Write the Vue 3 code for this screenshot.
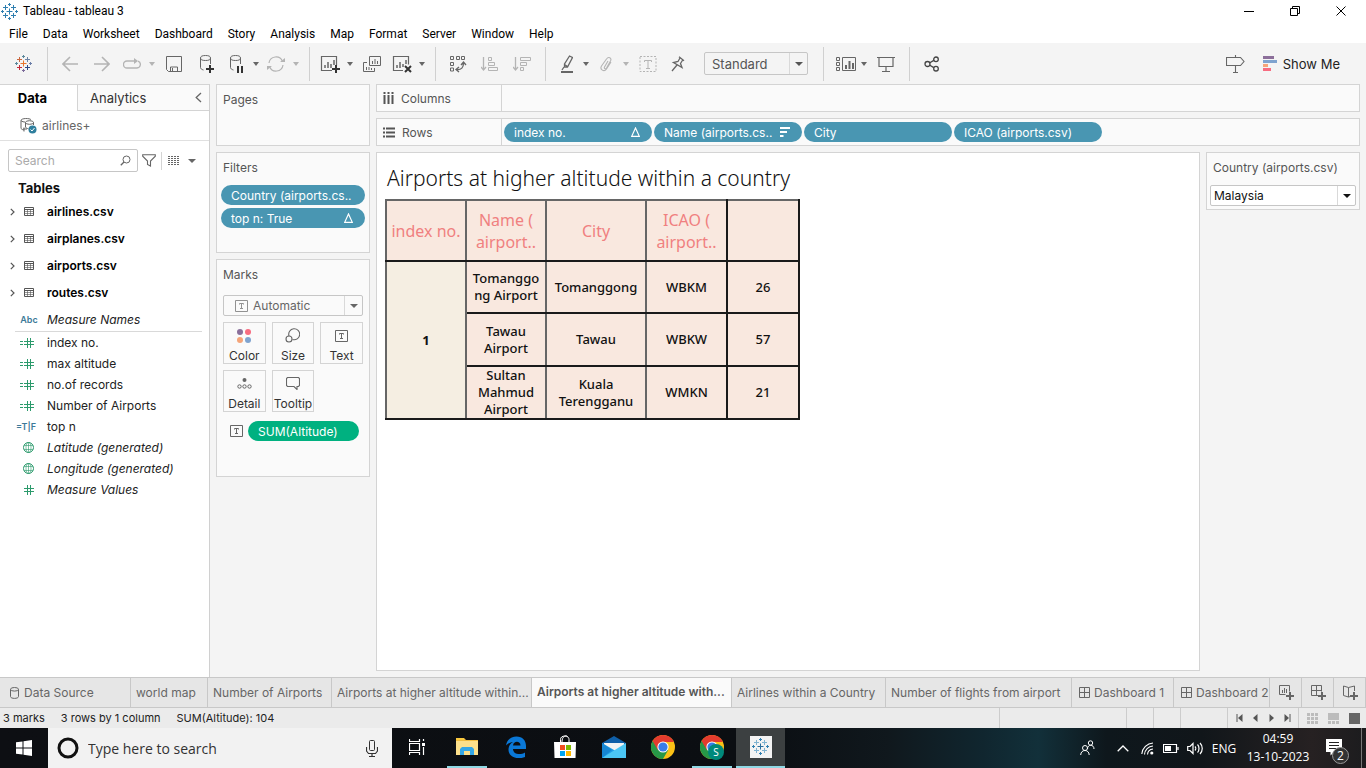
<script setup>
import { h, ref } from 'vue'

const plus = (x, y, r, c, w = 1) =>
  `<path d="M${x - r} ${y}h${2 * r}M${x} ${y - r}v${2 * r}" stroke="${c}" stroke-width="${w}"/>`

const mark = (mid, ul, ur, ll, lr, n, s, w, e) =>
  plus(8.5, 8.5, 3, mid, 1) +
  plus(4.5, 4.5, 2.5, ul) + plus(12.5, 4.5, 2.5, ur) +
  plus(4.5, 12.5, 2.5, ll) + plus(12.5, 12.5, 2.5, lr) +
  plus(8.5, 1.5, 1.5, n) + plus(8.5, 15.5, 1.5, s) +
  plus(1.5, 8.5, 1.5, w) + plus(15.5, 8.5, 1.5, e)

const blue = '#2f7fb0'
const pale = '#7fb3d1'

const chrome =
  '<circle cx="12" cy="12" r="12" fill="#fbc116" stroke="none"/><g stroke="none">' +
  '<path d="M12 12L1.6 6A12 12 0 0 0 12 24L17.2 15z" fill="#279847"/>' +
  '<path d="M12 0A12 12 0 0 0 1.6 6L6.8 15L12 7H22.9A12 12 0 0 0 12 0z" fill="#e33b2e"/>' +
  '<circle cx="12" cy="12" r="5.6" fill="#fff"/><circle cx="12" cy="12" r="4.600" fill="#3a7de8"/></g>'

const icons = {
  app: [17, 17, mark(blue, blue, blue, blue, blue, blue, blue, blue, blue)],
  logo: [17, 17, mark('#e8762c', '#c9673f', '#6c84a5', '#c2293a', '#2b4a86', '#5b879b', '#7b6a9a', '#59879b', '#6b7ea8')],
  back: [16, 16, '<path d="M16 8H1M8 1L1 8l7 7" stroke-width="1.6"/>'],
  forward: [16, 16, '<path d="M0 8h15M8 1l7 7-7 7" stroke-width="1.6"/>'],
  loop: [18, 12, '<path d="M12 3H4a3.5 3.5 0 0 0 0 7h10a3.5 3.5 0 0 0 1-6.8" stroke-width="1.3"/><path d="M11 0l4 3-4 3z" fill="currentColor" stroke="none"/>'],
  save: [16, 16, '<path d="M.5 .5h15v15H2.5l-2-2zM4.5 15v-4h7v4M6.5 12v3"/>'],
  dbadd: [16, 18, '<ellipse cx="7.5" cy="3" rx="5" ry="2.5"/><path d="M2.500 3v9.500c0 1 1 2 3 2.500M12.500 3v6"/><path d="M8 14h8M12 10v8" stroke="#333" stroke-width="2"/>'],
  dbpause: [16, 18, '<ellipse cx="7.500" cy="3" rx="5" ry="2.500"/><path d="M2.500 3v9.500c0 1 1 2 3 2.500M12.500 3v6"/><path d="M10 11v7M14 11v7" stroke="#333" stroke-width="2"/>'],
  refresh: [18, 16, '<path d="M2 7a7 7 0 0 1 13.500-1.500M16 9a7 7 0 0 1-13.500 1.500" stroke-width="1.200"/><path d="M13 6h5V2M5 10H0v4" fill="currentColor" stroke="none"/>'],
  newsheet: [20, 18, '<path d="M12 15.500H1.500V1.500h15v9" stroke-width="1.200"/><path d="M5 10v3M8 7v6M11 9v4M14 5v5" stroke-width="1.500"/><path d="M12 14h8M16 10v8" stroke="#333" stroke-width="2"/>'],
  dup: [18, 16, '<path d="M6.500 .5h11v9h-11zM4 6.500H.5v9h11V12"/><path d="M9.500 5v3M12 3v5M14.500 5v3M3.500 11v3M6 11v3M8.500 12v2"/>'],
  clear: [20, 18, '<path d="M11 15.500H1.500V1.500h15v8" stroke-width="1.200"/><path d="M5 10v3M8 7v6M11 9v3M14 5v4" stroke-width="1.500"/><path d="M13 11l6 6M19 11l-6 6" stroke="#333" stroke-width="2"/>'],
  swap: [18, 18, '<path d="M1.500 1.500h3v3h-3zM7.500 1.500h3v3h-3zM12.500 1.500h3v3h-3zM1.500 7.500h3v3h-3zM1.500 13h3v3h-3z"/><path d="M7.500 14.500c5 .5 7-2 7-6.500M12 10l2.500-3L17 10M10 12l-3 2.500L10 17" stroke-width="1.300"/>'],
  asc: [18, 16, '<path d="M2.500 1v13M0 11l2.500 3L5 11" stroke-width="1.300"/><path d="M7.500 1.500h3v3h-3zM7.500 6.500h6v3h-6zM7.500 11.500h9v3h-9z"/>'],
  desc: [18, 16, '<path d="M2.500 1v13M0 11l2.500 3L5 11" stroke-width="1.300"/><path d="M7.500 1.500h10v3h-10zM7.500 6.500h6v3h-6zM7.500 11.500h3v3h-3z"/>'],
  marker: [14, 18, '<path d="M10.500 1l3 1.500-5 9.500H5.500V9zM5.500 9.500l3 2M5 12l-2 3" stroke-width="1.300"/><path d="M2 17h12" stroke-width="2"/>'],
  clip: [14, 16, '<path d="M9 5L5.500 11c-.8 1.500 1 2.500 2 1L11.500 5c1.500-3-2-5-4-2L2.500 10c-2 3.500 2.500 6.500 5 3L12 6" stroke-width="1.100"/>'],
  textbox: [18, 16, '<rect x="1" y=".5" width="16" height="15" stroke-dasharray="2 1.500"/><path d="M5.500 6V4.500h7V6M9 4.500v8M7 12.500h4"/>'],
  pin: [18, 16, '<path d="M8 .8l5 4M12 3.500L9.500 7.500l1.500 4L2.500 6.500l4.500-1L9 2M6 9l-5 6" stroke-width="1.300"/>'],
  cards: [24, 16, '<path d="M4.500 1.500h3v3h-3zM4.500 6.500h3v3h-3zM4.500 11.500h3v3h-3zM10.500 1.500h13v13h-13z"/><path d="M14 9v4M17.500 5v8M21 7v6" stroke-width="2"/>'],
  present: [18, 16, '<path d="M0 1.500h18M2 2v8.500h14V2M9 10.500v5M5 15.500h8" stroke-width="1.200"/>'],
  share: [16, 16, '<g stroke="#444" stroke-width="1.300"><circle cx="3.500" cy="8" r="2.500"/><circle cx="12" cy="3.300" r="2.300"/><circle cx="12" cy="12.700" r="2.300"/><path d="M5.800 6.800l4-2.400M5.800 9.200l4 2.400"/></g>'],
  sign: [19, 18, '<path d="M.5 2.500h14L18 6.500l-3.500 4H.5zM9.500 0v2M9.500 10.500v7M7 17.500h5" stroke-width="1.100"/>'],
  showme: [14, 15, '<path d="M0 0h11v3H0z" fill="#8c6f9a" stroke="none"/><path d="M0 4h14v3H0z" fill="#7fa3cf" stroke="none"/><path d="M0 8h5v3H0z" fill="#f5a479" stroke="none"/><path d="M0 12h8v3H0z" fill="#f76c80" stroke="none"/>'],
  source: [17, 17, '<path d="M1 3.500v7.500c0 1 1 1.600 3 2M1 3.500C1 1 10 1 11 2.800" /><ellipse cx="9.500" cy="5.500" rx="4" ry="1.800"/><path d="M5.500 5.500v4.500c0 1 2 1.500 3 1.800M13.500 5.500V8M4 14.500v-4M3 12h4M1 3.500c1 1.300 3 1.500 4 1.500"/><circle cx="12.500" cy="12.500" r="4" fill="#2f7f9e" stroke="none"/><path d="M10.500 12.500l1.500 1.500 2.500-3" stroke="#fff"/>'],
  collapse: [7, 11, '<path d="M6 1L1.200 5.500 6 10" stroke-width="1.300"/>'],
  search: [11, 11, '<circle cx="6.500" cy="4.500" r="3.500"/><path d="M4 7L.8 10.200" stroke-width="1.300"/>'],
  funnel: [14, 13, '<path d="M.7 .7h12.600v1.500L8.500 7v5l-3-1.500V7L.7 2.200z" stroke-width="1.100"/>'],
  list: [12, 9, '<path d="M0 .5h12M0 2.500h12M0 4.500h12M0 6.500h12M0 8.500h12" stroke-dasharray="2 1"/>'],
  expand: [5, 8, '<path d="M.8 .8L4 4 .8 7.200" stroke-width="1.200"/>'],
  table: [10, 9, '<path d="M.5 .5h9v8h-9zM.5 2.500h9"/><path d="M.5 4.500h9M.5 6.500h9M3.500 2.500v6M6.500 2.500v6" stroke-opacity=".6"/>'],
  hash: [10, 10, '<path d="M3.500 0v10M6.500 0v10M0 3.500h10M0 6.500h10"/>'],
  calchash: [14, 10, '<path d="M7.500 0v10M10.500 0v10M4 3.500h10M4 6.500h10M0 3.500h3M0 6.500h3"/>'],
  globe: [11, 11, '<circle cx="5.500" cy="5.500" r="5"/><path d="M1 3.500h9M1 7.500h9M5.500 .5v10" stroke-opacity=".6"/><ellipse cx="5.500" cy="5.500" rx="2.500" ry="5" stroke-opacity=".6"/>'],
  iii: [11, 13, '<path d="M1.500 0v2M1.500 3v9M5.500 0v2M5.500 3v9M9.500 0v2M9.500 3v9" stroke-width="2"/>'],
  rows: [12, 11, '<path d="M0 1.500h2M3 1.500h9M0 5.500h2M3 5.500h9M0 9.500h2M3 9.500h9" stroke-width="2"/>'],
  delta: [9, 10, '<path d="M4.500 1L8.300 9.300H.7z" stroke-width="1.200"/>'],
  sorted: [10, 10, '<path d="M0 1h10M0 5h7M0 9h3.500" stroke-width="2"/>'],
  t: [13, 12, '<path d="M.5 .5h12v11H.5z"/><path d="M4.500 4.500v-1h4v1M6.500 3.500v5M5 8.500h3"/>'],
  color: [14, 14, '<g stroke="none"><circle cx="3" cy="3" r="3" fill="#8a6f9b"/><circle cx="11" cy="3" r="3" fill="#f76c80"/><circle cx="3" cy="11" r="3" fill="#f5a479"/><circle cx="11" cy="11" r="3" fill="#7fa3cf"/></g>'],
  size: [15, 15, '<path d="M4 8a5.500 5.500 0 1 1 3.500 3.500" stroke-width="1.100"/><circle cx="4" cy="11" r="3" stroke-width="1.100"/>'],
  detail: [15, 11, '<circle cx="7.500" cy="2" r="2" fill="currentColor" stroke="none"/><circle cx="2.500" cy="8.500" r="1.700"/><circle cx="7.500" cy="8.500" r="1.700"/><circle cx="12.500" cy="8.500" r="1.700"/>'],
  tooltip: [14, 13, '<path d="M1.500 .5h11l1 1v7l-1 1H11v3l-3-3H1.500l-1-1v-7z" stroke-width="1.100"/>'],
  cyl: [9, 12, '<path d="M.5 2.500v7c0 2.500 8 2.500 8 0v-7"/><ellipse cx="4.500" cy="2.300" rx="4" ry="1.800"/>'],
  grid: [11, 11, '<path d="M.5 .5h10v10H.5zM5.500 .5v10M.5 5.500h10"/>'],
  addsheet: [16, 15, '<path d="M6.500 9.500h-6v-9h10v6M3.500 5v3M5.500 3v5M7.500 4v4"/><path d="M7 11h8M11 7v8" stroke-width="2"/>'],
  adddash: [16, 15, '<path d="M7.500 10.500h-7v-10h10v6M5.500 .5v10M.5 5.500h10"/><path d="M7 11h8M11 7v8" stroke-width="2"/>'],
  addstory: [16, 15, '<path d="M.5 1l5 1.500L11.500 1v5M.5 1v9.500l5 1.500 2-.5M5.500 2.500V12"/><path d="M7 11h8M11 7v8" stroke-width="2"/>'],
  first: [7, 8, '<path d="M1 0v8" /><path d="M6.500 0v8L2 4z" fill="currentColor" stroke="none"/>'],
  prev: [5, 8, '<path d="M4.500 0v8L0 4z" fill="currentColor" stroke="none"/>'],
  next: [5, 8, '<path d="M.5 0v8L5 4z" fill="currentColor" stroke="none"/>'],
  last: [7, 8, '<path d="M6 0v8" /><path d="M.5 0v8L5 4z" fill="currentColor" stroke="none"/>'],
  tiles: [11, 11, '<path d="M0 1.500h11M0 5.500h11M0 9.500h11" stroke-width="3" stroke-dasharray="3 1"/>'],
  film: [11, 11, '<path d="M0 3.500h11" stroke-width="7"/><path d="M0 9.500h11" stroke-width="3" stroke-dasharray="3 1"/>'],
  full: [11, 11, '<path d="M0 0h11v11H0z" fill="currentColor" stroke="none"/>'],
  min: [10, 10, '<path d="M0 5.500h10"/>'],
  restore: [10, 10, '<path d="M.5 2.500h7v7h-7zM2.500 2.500v-2h7v7h-2"/>'],
  close: [10, 10, '<path d="M.5 .5l9 9M9.500 .5l-9 9"/>'],
  windows: [16, 16, '<path d="M0 2.300L6.500 1.400v6.100H0zM7.500 1.200L16 0v7.500H7.500zM0 8.500h6.500v6.100L0 13.700zM7.500 8.500H16V16l-8.500-1.200z" fill="#fff" stroke="none"/>'],
  cortana: [22, 22, '<circle cx="11" cy="11" r="9" stroke="#111" stroke-width="3"/>'],
  mic: [12, 17, '<rect x="3.500" y=".5" width="5" height="10" rx="1"/><path d="M.5 7v4l2 2.500h7l2-2.500V7M6 13.500v3M3 16.500h6" stroke-width="1.200"/>'],
  taskview: [17, 16, '<path d="M.5 0v2.500h10V0M.5 4.500h10v7H.5zM.5 16v-2.500h10V16M14.500 0v2M14.500 8v8" stroke-width="1.200"/><path d="M13 4h3v3h-3z" fill="#fff" stroke="none"/>'],
  folder: [22, 20, '<g stroke="none"><path d="M0 1h8l2 2h12v14H0z" fill="#f2bd3f"/><path d="M0 4h22v14H0z" fill="#fde08b"/><path d="M0 1h8v2H0z" fill="#f9c93f"/><path d="M4 18v-6l2-2h10l2 2v6h-4v-4H8v4z" fill="#35a7e6"/></g>'],
  edge: [22, 22, '<path d="M1 9.500C2 3.500 6.500 .5 11.500 .5c6 0 9.500 4 9.500 9.500V13H8c.3 6 8 6 12 3.500v4.500C13 24 3.500 21.500 3.500 13.500c0-4 2.500-6.500 4.500-7.500C4.500 6.500 2.500 8 1 9.500zM8 9.500h7.500C15.500 4.500 8.500 4.500 8 9.500z" fill="#0a78d7" stroke="none"/>'],
  store: [24, 24, '<path d="M7.500 7V4.500C7.500 2.500 9 1 12 1s4 2 4 3.500V7M9 7c0-6 4-7 5.500-5.500" stroke="#fff"/><g stroke="none"><path d="M1 7h22l-.5 16H1.500z" fill="#fff"/><path d="M7 10h5v5H7z" fill="#f25022"/><path d="M13 10h5v5h-5z" fill="#7fba00"/><path d="M7 16h5v5H7z" fill="#00a4ef"/><path d="M13 16h5v5h-5z" fill="#ffb900"/></g>'],
  mail: [24, 22, '<g stroke="none"><path d="M0 7L12 0l12 7v2H0z" fill="#0f5fa8"/><path d="M2 7h20v8H2z" fill="#f3f3f3"/><path d="M0 7l12 7L24 22H0z" fill="#1f9ee6"/><path d="M24 7L0 22h24z" fill="#4bc6f4"/><path d="M0 7v15l10-8z" fill="#1586d4"/></g>'],
  chrome: [24, 24, chrome],
  tableau: [22, 22, '<path d="M0 0h22v22H0z" fill="#f3f3f3" stroke="none"/><g transform="translate(2 2)">' + mark('#2a6f9e', pale, pale, pale, pale, blue, blue, blue, blue) + '</g>'],
  people: [15, 16, '<circle cx="10.500" cy="3" r="2.200"/><path d="M7.500 9c0-5 6.500-5 6.500 0"/><circle cx="5" cy="8" r="2.500"/><path d="M.7 15c0-6 8.500-6 8.500 0"/>'],
  up: [12, 7, '<path d="M.7 6.300L6 1l5.300 5.300" stroke-width="1.300"/>'],
  wifi: [13, 13, '<path d="M.8 12A12 12 0 0 1 12 1M3.500 12.500A9 9 0 0 1 12 4M6.500 12.500A6 6 0 0 1 12 7" stroke-width="1.100"/><circle cx="10.800" cy="11" r="1.600" fill="#fff" stroke="none"/>'],
  battery: [16, 9, '<path d="M.5 .5h13v8H.5zM15 3v3" stroke-width="1.200"/><path d="M2 2h6v5H2z" fill="#fff" stroke="none"/>'],
  sound: [17, 13, '<path d="M.7 4.500H3L6 1.500v10L3 8.500H.7zM8 4.500c1 1 1 3 0 4M10.500 2.500c2 2 2 6 0 8M13 1c3 3 3 8 0 11" stroke-width="1.200"/>'],
  note: [17, 18, '<path d="M0 0h16v13H8l-3.500 3.500V13H0z" fill="#fff" stroke="none"/><path d="M3 3.500h10M3 6.500h10M3 9.500h7" stroke="#222"/>'],
}

const Ico = (props) =>
  h('svg', {
    viewBox: `0 0 ${icons[props.name][0]} ${icons[props.name][1]}`,
    width: icons[props.name][0],
    height: icons[props.name][1],
    fill: 'none',
    stroke: 'currentColor',
    'aria-hidden': 'true',
    innerHTML: icons[props.name][2],
  })
Ico.props = ['name']

const menus = ['File', 'Data', 'Worksheet', 'Dashboard', 'Story', 'Analysis', 'Map', 'Format', 'Server', 'Window', 'Help']

const groups = [
  [{ i: 'back', off: 1 }, { i: 'forward', off: 1 }, { i: 'loop', off: 1, menu: 1 }, { i: 'save' }, { i: 'dbadd' }, { i: 'dbpause', menu: 1 }, { i: 'refresh', off: 1, menu: 1 }],
  [{ i: 'newsheet', menu: 1 }, { i: 'dup' }, { i: 'clear', menu: 1 }],
  [{ i: 'swap' }, { i: 'asc', off: 1 }, { i: 'desc', off: 1 }],
  [{ i: 'marker', menu: 1 }, { i: 'clip', off: 1, menu: 1 }, { i: 'textbox', off: 1 }, { i: 'pin' }],
  [{ i: 'cards', menu: 1 }, { i: 'present' }],
  [{ i: 'share' }],
]

const tables = ['airlines.csv', 'airplanes.csv', 'airports.csv', 'routes.csv']
const fields = [
  { i: 'calchash', name: 'index no.' },
  { i: 'calchash', name: 'max altitude' },
  { i: 'calchash', name: 'no.of records' },
  { i: 'calchash', name: 'Number of Airports' },
  { text: '=T|F', name: 'top n' },
  { i: 'globe', name: 'Latitude (generated)', gen: 1 },
  { i: 'globe', name: 'Longitude (generated)', gen: 1 },
  { i: 'hash', name: 'Measure Values', gen: 1 },
]

const rowPills = [
  { name: 'index no.', i: 'delta' },
  { name: 'Name (airports.cs..', i: 'sorted' },
  { name: 'City' },
  { name: 'ICAO (airports.csv)' },
]

const marks = [
  { name: 'Color', i: 'color' },
  { name: 'Size', i: 'size' },
  { name: 'Text', i: 't' },
  { name: 'Detail', i: 'detail' },
  { name: 'Tooltip', i: 'tooltip' },
]

const data = [
  { name: ['Tomanggo', 'ng Airport'], city: ['Tomanggong'], icao: 'WBKM', alt: 26 },
  { name: ['Tawau', 'Airport'], city: ['Tawau'], icao: 'WBKW', alt: 57 },
  { name: ['Sultan', 'Mahmud', 'Airport'], city: ['Kuala', 'Terengganu'], icao: 'WMKN', alt: 21 },
]

const sheets = [
  { name: 'Data Source', w: 131, i: 'cyl' },
  { name: 'world map', w: 77 },
  { name: 'Number of Airports', w: 124 },
  { name: 'Airports at higher altitude within...', w: 200 },
  { name: 'Airports at higher altitude with...', w: 200, on: 1 },
  { name: 'Airlines within a Country', w: 154 },
  { name: 'Number of flights from airport', w: 186 },
  { name: 'Dashboard 1', w: 102, i: 'grid' },
  { name: 'Dashboard 2', w: 96, i: 'grid' },
]

const apps = [
  { i: 'folder', label: 'File Explorer', open: 1 },
  { i: 'edge', label: 'Edge' },
  { i: 'store', label: 'Store' },
  { i: 'mail', label: 'Mail' },
  { i: 'chrome', label: 'Chrome' },
  { i: 'chrome', label: 'Chrome profile S', open: 1, badge: 'S' },
  { i: 'tableau', label: 'Tableau', open: 1, active: 1 },
]

const fieldQuery = ref('')
const webQuery = ref('')
</script>

<template>
  <div class="window">
    <header class="titlebar">
      <Ico name="app" />
      <h1>Tableau - tableau 3</h1>
      <div class="winctl">
        <button aria-label="Minimize"><Ico name="min" /></button>
        <button aria-label="Restore"><Ico name="restore" /></button>
        <button aria-label="Close"><Ico name="close" /></button>
      </div>
    </header>

    <nav class="menubar">
      <button v-for="m in menus" :key="m">{{ m }}</button>
    </nav>

    <div class="toolbar">
      <button class="home" aria-label="Start page"><Ico name="logo" /></button>
      <template v-for="(g, gi) in groups" :key="gi">
        <div class="tools">
          <template v-for="t in g" :key="t.i">
            <button class="tool" :class="{ off: t.off, split: t.menu }" :aria-label="t.i"><Ico :name="t.i" /></button>
            <button v-if="t.menu" class="drop" :class="{ off: t.off }" :aria-label="t.i + ' menu'"><span class="caret"></span></button>
          </template>
          <span v-if="gi === 3" class="picker fit">
            <select aria-label="Fit"><option>Standard</option></select>
            <span class="arrow"><span class="caret big"></span></span>
          </span>
        </div>
      </template>
      <button class="tool guide" aria-label="Guide"><Ico name="sign" /></button>
      <button class="showme"><Ico name="showme" />Show Me</button>
    </div>

    <main class="work">
      <aside class="side">
        <div class="sidetabs">
          <button class="on">Data</button>
          <button class="analytics">Analytics</button>
          <button class="fold" aria-label="Collapse"><Ico name="collapse" /></button>
        </div>
        <div class="source"><Ico name="source" />airlines+</div>
        <div class="finder">
          <label class="searchbox">
            <input v-model="fieldQuery" placeholder="Search" aria-label="Search fields" />
            <Ico name="search" />
          </label>
          <button class="funnel" aria-label="Filter"><Ico name="funnel" /></button>
          <button class="view" aria-label="View"><Ico name="list" /><span class="caret big"></span></button>
        </div>
        <h2>Tables</h2>
        <ul class="tables">
          <li v-for="t in tables" :key="t">
            <span class="exp"><Ico name="expand" /></span>
            <Ico name="table" />
            <strong>{{ t }}</strong>
          </li>
        </ul>
        <div class="field names"><span class="glyph abc">Abc</span><em>Measure Names</em></div>
        <ul class="fields">
          <li v-for="f in fields" :key="f.name" class="field">
            <span class="glyph" :class="{ tf: f.text }"><Ico v-if="f.i" :name="f.i" /><template v-else>{{ f.text }}</template></span>
            <em v-if="f.gen">{{ f.name }}</em>
            <span v-else>{{ f.name }}</span>
          </li>
        </ul>
      </aside>

      <div class="cards">
        <section class="card pages"><h3>Pages</h3></section>
        <section class="card filters">
          <h3>Filters</h3>
          <button class="pill">Country (airports.cs..</button>
          <button class="pill">top n: True<Ico name="delta" /></button>
        </section>
        <section class="card marks">
          <h3>Marks</h3>
          <span class="picker auto">
            <Ico name="t" />
            <select aria-label="Mark type"><option>Automatic</option></select>
            <span class="arrow"><span class="caret big"></span></span>
          </span>
          <div class="markgrid">
            <button v-for="m in marks" :key="m.name"><span><Ico :name="m.i" /></span>{{ m.name }}</button>
          </div>
          <div class="encoding">
            <Ico name="t" />
            <button class="pill green">SUM(Altitude)</button>
          </div>
        </section>
      </div>

      <div class="center">
        <section class="shelf">
          <h3><Ico name="iii" />Columns</h3>
        </section>
        <section class="shelf">
          <h3><Ico name="rows" />Rows</h3>
          <div class="pills">
            <button v-for="p in rowPills" :key="p.name" class="pill">{{ p.name }}<Ico v-if="p.i" :name="p.i" /></button>
          </div>
        </section>
        <div class="stage">
          <section class="viz">
            <h2>Airports at higher altitude within a country</h2>
            <table>
              <colgroup><col class="c80" /><col class="c80" /><col class="c100" /><col class="c81" /><col class="c72" /></colgroup>
              <thead>
                <tr>
                  <th>index no.</th>
                  <th>Name (<br />airport..</th>
                  <th>City</th>
                  <th class="dark">ICAO (<br />airport..</th>
                  <th class="dark"></th>
                </tr>
              </thead>
              <tbody>
                <tr v-for="(r, i) in data" :key="r.icao">
                  <td v-if="i === 0" rowspan="3" class="idx">1</td>
                  <td><div v-for="l in r.name" :key="l">{{ l }}</div></td>
                  <td><div v-for="l in r.city" :key="l">{{ l }}</div></td>
                  <td class="dark">{{ r.icao }}</td>
                  <td class="dark">{{ r.alt }}</td>
                </tr>
              </tbody>
            </table>
          </section>
          <aside class="card country">
            <label for="country">Country (airports.csv)</label>
            <span class="picker">
              <select id="country"><option>Malaysia</option></select>
              <span class="arrow"><span class="caret big"></span></span>
            </span>
          </aside>
        </div>
      </div>
    </main>

    <nav class="sheets">
      <button v-for="s in sheets" :key="s.name" class="sheet" :class="{ on: s.on, iconic: s.i, db: s.i === 'cyl' }" :style="{ width: s.w + 'px' }">
        <Ico v-if="s.i" :name="s.i" />{{ s.name }}
      </button>
      <button class="add" aria-label="New worksheet"><Ico name="addsheet" /></button>
      <button class="add" aria-label="New dashboard"><Ico name="adddash" /></button>
      <button class="add" aria-label="New story"><Ico name="addstory" /></button>
    </nav>

    <footer class="status">
      <span>3 marks</span><span>3 rows by 1 column</span><span>SUM(Altitude): 104</span>
      <i class="slot wide"></i><i class="slot"></i><i class="slot"></i><i class="slot mid"></i>
      <div class="pager">
        <button aria-label="First"><Ico name="first" /></button>
        <button aria-label="Previous"><Ico name="prev" /></button>
        <button aria-label="Next"><Ico name="next" /></button>
        <button aria-label="Last"><Ico name="last" /></button>
      </div>
      <div class="views">
        <button aria-label="Sheet sorter"><Ico name="tiles" /></button>
        <button aria-label="Filmstrip"><Ico name="film" /></button>
        <button class="on" aria-label="Tabs"><Ico name="full" /></button>
      </div>
    </footer>

    <div class="taskbar">
      <button class="start" aria-label="Start"><Ico name="windows" /></button>
      <label class="cortana">
        <Ico name="cortana" />
        <input v-model="webQuery" placeholder="Type here to search" aria-label="Type here to search" />
        <Ico name="mic" />
      </label>
      <button class="app tv" aria-label="Task view"><Ico name="taskview" /></button>
      <button v-for="a in apps" :key="a.label" class="app" :class="{ open: a.open, active: a.active }" :aria-label="a.label">
        <Ico :name="a.i" /><span v-if="a.badge" class="badge">{{ a.badge }}</span>
      </button>
      <div class="tray">
        <button class="people" aria-label="People"><Ico name="people" /></button>
        <button aria-label="Hidden icons"><Ico name="up" /></button>
        <button aria-label="Network"><Ico name="wifi" /></button>
        <button aria-label="Battery"><Ico name="battery" /></button>
        <button aria-label="Sound"><Ico name="sound" /></button>
        <button class="lang">ENG</button>
        <button class="clock"><time>04:59</time><time>13-10-2023</time></button>
        <button class="notes" aria-label="Notifications"><Ico name="note" /><span class="count">2</span></button>
      </div>
    </div>
  </div>
</template>

<style>
body {
  background: #f4f4f4;
}
</style>

<style scoped>
.window {
  display: flex;
  flex-direction: column;
  min-height: 100vh;
  font-family: Inter, "Open Sans", sans-serif;
  font-size: 12px;
  color: #333;
  background: #f4f4f4;
  overflow: hidden;
}
* {
  box-sizing: border-box;
}
svg {
  display: block;
  flex: none;
}
button,
input,
select {
  font: inherit;
  color: inherit;
  background: none;
  border: 0;
  padding: 0;
  margin: 0;
  outline: 0;
}
button {
  display: flex;
  align-items: center;
  justify-content: center;
  white-space: nowrap;
}
select {
  appearance: none;
}
h1, h2, h3, ul {
  margin: 0;
  padding: 0;
  font-size: inherit;
  font-weight: 400;
  list-style: none;
}

.titlebar {
  display: flex;
  align-items: center;
  height: 22px;
  padding-left: 1px;
  gap: 5px;
  background: #fff;
  color: #000;
  font-family: Roboto, sans-serif;
}
.winctl {
  display: flex;
  margin-left: auto;
}
.winctl button {
  width: 46px;
  height: 20px;
}
.winctl button:last-child {
  margin-right: 2px;
}
.menubar {
  display: flex;
  height: 21px;
  padding: 2px 0 0 9px;
  gap: 15px;
  background: #fff;
  color: #000;
  font-family: Roboto, sans-serif;
}

.toolbar {
  display: flex;
  align-items: center;
  height: 41px;
  color: #666;
}
.home {
  width: 47px;
}
.tools {
  display: flex;
  align-items: center;
  height: 34px;
  padding: 0 7px 0 6px;
  border-left: 1px solid #d0d0d0;
}
.tool {
  width: 32px;
  height: 24px;
}
.tool.split {
  width: 28px;
}
.drop {
  width: 12px;
  height: 24px;
}
.off {
  color: #b4b4b4;
}
.caret {
  width: 0;
  height: 0;
  border: 3px solid transparent;
  border-top: 4px solid currentColor;
  border-bottom: 0;
}
.caret.big {
  border-width: 4px 4px 0;
}
.picker {
  position: relative;
  display: flex;
  align-items: center;
  border: 1px solid #c6c6c6;
  border-radius: 2px;
}
.picker select {
  flex: 1;
  min-width: 0;
  height: 100%;
}
.arrow {
  display: flex;
  align-items: center;
  justify-content: center;
  width: 18px;
  height: 100%;
  border-left: 1px solid #d9d9d9;
  pointer-events: none;
}
.fit {
  width: 104px;
  height: 23px;
  margin: 0 8px;
  font-size: 13px;
  color: #555;
}
.fit select {
  padding-left: 7px;
}
.guide {
  margin-left: auto;
}
.showme {
  gap: 6px;
  margin: 0 26px 0 11px;
  font-size: 13px;
  color: #222;
}

.work {
  display: flex;
  flex: 1;
}
.side {
  width: 210px;
  background: #fff;
  border-right: 1px solid #d0d0d0;
  border-top: 1px solid #d4d4d4;
}
.sidetabs {
  display: flex;
  height: 26px;
  font-size: 13px;
}
.sidetabs .on {
  width: 77px;
  padding-right: 12px;
  font-weight: 700;
  color: #000;
}
.sidetabs .analytics {
  flex: 1;
  justify-content: flex-start;
  padding-left: 12px;
  background: #fafafa;
  border-left: 1px solid #d4d4d4;
  border-bottom: 1px solid #d4d4d4;
}
.fold {
  width: 21px;
  color: #666;
  background: #fafafa;
  border-bottom: 1px solid #d4d4d4;
}
.source {
  display: flex;
  align-items: center;
  gap: 5px;
  height: 30px;
  padding-left: 20px;
  color: #666;
  border-bottom: 1px solid #e0e0e0;
}
.finder {
  display: flex;
  align-items: center;
  margin-top: 8px;
  padding-left: 8px;
  color: #666;
}
.searchbox {
  display: flex;
  align-items: center;
  width: 130px;
  height: 23px;
  padding: 0 6px;
  border: 1px solid #c6c6c6;
  border-radius: 2px;
}
.searchbox input {
  flex: 1;
  min-width: 0;
}
input::placeholder {
  color: #aaa;
  opacity: 1;
}
.funnel {
  width: 24px;
  height: 18px;
  padding-right: 2px;
  border-right: 1px solid #d4d4d4;
}
.view {
  gap: 8px;
  margin-left: 6px;
}
.side h2 {
  margin: 6px 0 0 18px;
  font-size: 13px;
  line-height: 20px;
  font-weight: 700;
  color: #111;
}
.tables li {
  display: flex;
  align-items: center;
  height: 27px;
  padding-left: 10px;
  color: #555;
}
.exp {
  width: 14px;
}
.tables strong {
  margin-left: 13px;
  font-weight: 600;
  color: #000;
}
.field {
  display: flex;
  align-items: center;
  height: 21px;
  color: #222;
}
.glyph {
  display: flex;
  justify-content: flex-end;
  width: 34px;
  margin-right: 13px;
  color: #2c9a6c;
}
.glyph.abc {
  justify-content: center;
  width: 28px;
  margin: 0 4px 0 15px;
  font-size: 9px;
  font-weight: 600;
  color: #3c7a99;
}
.glyph.tf {
  width: 36px;
  margin-right: 11px;
  font-size: 9px;
  font-weight: 600;
  color: #3c7a99;
}
.field em {
  font-style: italic;
}
.names {
  height: 25px;
  padding-top: 2px;
}
.fields {
  margin: 0 7px 0 15px;
  border-top: 1px solid #d9d9d9;
}
.fields .field {
  margin-left: -15px;
}

.cards {
  display: flex;
  flex-direction: column;
  gap: 6px;
  width: 154px;
  margin: 0 6px;
}
.card {
  background: #fafafa;
  border: 1px solid #d4d4d4;
}
.cards h3 {
  padding-left: 6px;
  line-height: 30px;
  color: #555;
}
.pages {
  height: 62px;
}
.filters {
  display: flex;
  flex-direction: column;
  gap: 3px;
  height: 101px;
  padding: 0 4px;
}
.filters h3 {
  padding-left: 2px;
  line-height: 29px;
}
.pill {
  justify-content: flex-start;
  height: 20px;
  padding: 0 12px 0 10px;
  border-radius: 10px;
  color: #fff;
  background: #4996b2;
}
.pill svg {
  margin-left: auto;
}
.green {
  width: 111px;
  background: #00b180;
}
.marks {
  height: 218px;
  padding: 0 6px;
}
.marks h3 {
  padding-left: 0;
}
.auto {
  height: 21px;
  margin-top: 5px;
  padding-left: 11px;
  color: #666;
}
.auto svg {
  opacity: 0.7;
}
.auto select {
  padding-left: 5px;
}
.markgrid {
  display: grid;
  grid-template-columns: repeat(3, 1fr);
  gap: 6px;
  margin-top: 6px;
}
.markgrid button {
  flex-direction: column;
  justify-content: flex-start;
  height: 42px;
  border: 1px solid #d4d4d4;
  color: #333;
}
.markgrid span {
  display: flex;
  align-items: center;
  height: 25px;
  color: #666;
}
.encoding {
  display: flex;
  align-items: center;
  gap: 5px;
  margin: 9px 0 0 7px;
  color: #666;
}

.center {
  display: flex;
  flex-direction: column;
  flex: 1;
  gap: 6px;
  min-width: 0;
  margin-right: 6px;
}
.shelf {
  display: flex;
  height: 28px;
  background: #fafafa;
  border: 1px solid #d4d4d4;
}
.shelf h3 {
  display: flex;
  align-items: center;
  gap: 7px;
  width: 125px;
  padding-left: 6px;
  border-right: 1px solid #d4d4d4;
  color: #555;
}
.pills {
  display: flex;
  align-items: center;
  gap: 2px;
  padding-left: 2px;
}
.pills .pill {
  width: 148px;
}
.stage {
  display: flex;
  flex: 1;
  align-items: flex-start;
  gap: 6px;
}
.viz {
  flex: 1;
  align-self: stretch;
  margin-bottom: 6px;
  padding: 10px 8px;
  background: #fff;
  border: 1px solid #d4d4d4;
}
.viz h2 {
  padding-left: 2px;
  font-family: "Noto Sans", sans-serif;
  font-size: 21px;
  line-height: 30px;
  font-weight: 300;
  color: #111;
}
.viz table {
  margin-top: 6px;
  width: 415px;
  table-layout: fixed;
  border-collapse: collapse;
  font-family: "Noto Sans", sans-serif;
  font-size: 13px;
  line-height: 17px;
  text-align: center;
  color: #111;
  border-top: 2px solid #666;
  border-left: 2px solid #666;
}
.c80 {
  width: 80px;
}
.c81 {
  width: 81px;
}
.c100 {
  width: 100px;
}
.c72 {
  width: 72px;
}
.viz th {
  height: 61px;
  padding: 0;
  font-size: 16px;
  line-height: 22px;
  font-weight: 400;
  color: #f08080;
  background: #f9e8df;
  border-right: 2px solid #666;
  border-bottom: 2px solid #1a1a1a;
}
.viz td {
  height: 53px;
  padding: 0;
  font-weight: 500;
  background: #f9e8df;
  border-right: 2px solid #666;
  border-bottom: 2px solid #1a1a1a;
}
.viz tbody tr:first-child td {
  height: 52px;
}
.viz .idx {
  font-weight: 700;
  background: #f5eee2;
}
.viz .dark {
  border-right-color: #1a1a1a;
}
.country {
  width: 154px;
  padding: 0 3px 3px;
}
.country label {
  display: block;
  padding-left: 3px;
  line-height: 30px;
  color: #555;
}
.country .picker {
  height: 21px;
  margin-top: 2px;
  color: #111;
  background: #fff;
}
.country select {
  padding-left: 3px;
}

.sheets {
  display: flex;
  height: 31px;
  border-top: 1px solid #c8c8c8;
  border-bottom: 1px solid #c8c8c8;
  background: #e6e6e6;
  color: #666;
}
.sheet {
  justify-content: flex-start;
  flex: none;
  padding-left: 5px;
  gap: 4px;
  overflow: hidden;
  border-right: 1px solid #c8c8c8;
}
.sheet.iconic {
  padding-left: 7px;
}
.sheet.db {
  padding-left: 10px;
  gap: 5px;
}
.sheet.on {
  padding-bottom: 2px;
  font-weight: 600;
  color: #555;
  background: #fafafa;
}
.add {
  width: 32px;
  padding-left: 2px;
  border-right: 1px solid #c8c8c8;
}
.status {
  display: flex;
  align-items: center;
  height: 20px;
  padding-left: 3px;
  font-size: 11px;
  color: #222;
  background: #ebebeb;
}
.status span {
  margin-right: 16px;
}
.slot {
  width: 27px;
  height: 20px;
  border-left: 1px solid #ccc;
}
.slot.wide {
  width: 127px;
  margin-left: auto;
}
.slot.mid {
  width: 47px;
}
.pager,
.views {
  display: flex;
  align-items: center;
  height: 20px;
  color: #555;
  border-left: 1px solid #ccc;
}
.pager {
  width: 71px;
  padding-left: 3px;
}
.pager button {
  width: 16px;
}
.views {
  width: 68px;
  padding-left: 8px;
  gap: 10px;
  color: #bcbcbc;
}
.views .on {
  color: #666;
}

.taskbar {
  display: flex;
  height: 40px;
  color: #fff;
  font-family: "Open Sans", sans-serif;
  background: linear-gradient(90deg, #0d0f13 0%, #0b0e12 55%, #10181d 65%, #10262f 72%, #12303a 76%, #0e171c 81%, #11161a 88%, #262122 96%, #1c1c1e 100%);
}
.start {
  width: 48px;
}
.cortana {
  display: flex;
  align-items: center;
  width: 344px;
  padding: 0 14px 0 9px;
  color: #333;
  background: #f2f2f2;
}
.cortana input {
  flex: 1;
  min-width: 0;
  padding-left: 9px;
  font-size: 14px;
}
.cortana input::placeholder {
  color: #333;
}
.app {
  position: relative;
  width: 49px;
  border-bottom: 2px solid transparent;
}
.app.tv {
  width: 50px;
}
.app.open::after {
  content: "";
  position: absolute;
  left: 5px;
  right: 4px;
  bottom: -2px;
  height: 2px;
  background: #8fd8e4;
}
.app.active {
  background: #3c4041;
}
.app.active::after {
  left: 0;
  right: 0;
}
.badge {
  position: absolute;
  left: 21px;
  top: 16px;
  width: 16px;
  height: 16px;
  border-radius: 8px;
  background: #00897b;
  font-size: 10px;
  line-height: 16px;
}
.tray {
  display: flex;
  align-items: center;
  margin-left: auto;
  padding-right: 4px;
}
.tray button {
  width: 24px;
  height: 40px;
}
.tray .people {
  margin-right: 12px;
}
.tray .lang {
  width: 34px;
}
.tray .clock {
  flex-direction: column;
  width: 68px;
  margin-left: 3px;
  margin-right: 2px;
  line-height: 18px;
}
.tray .notes {
  position: relative;
  width: 48px;
  padding-right: 7px;
  border-right: 1px solid #777;
}
.count {
  position: absolute;
  right: 12px;
  bottom: 4px;
  width: 17px;
  height: 17px;
  border: 1px solid #999;
  border-radius: 9px;
  background: #333;
  line-height: 15px;
}
</style>
